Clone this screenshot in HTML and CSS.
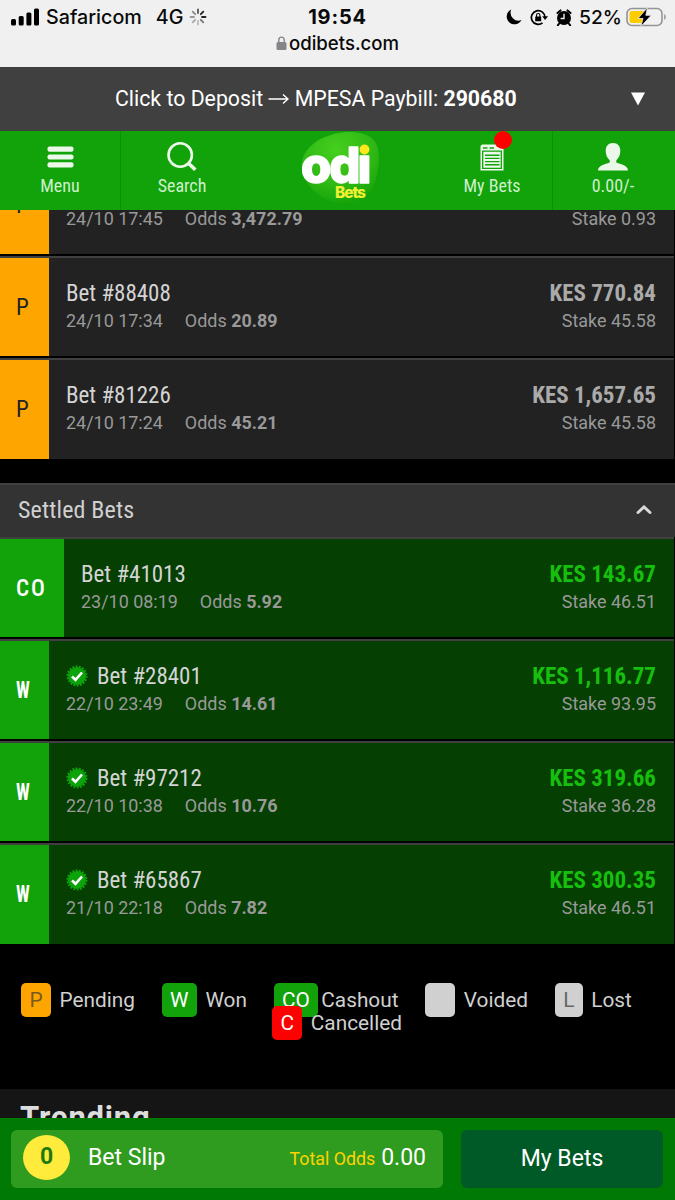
FILE: index.html
```html
<!DOCTYPE html>
<html lang="en">
<head>
    <meta charset="UTF-8">
    <meta name="viewport" content="width=device-width, initial-scale=1.0">
    <title>OdiBets - My Bets</title>
    <link rel="stylesheet" href="styles.css">
</head>
<body>
    <div class="status-bar">
        <div class="status-left">
            <svg class="signal" width="28" height="18" viewBox="0 0 28 18">
                <rect x="0" y="11" width="5" height="6.500" rx="1.500"/>
                <rect x="7.700" y="8" width="5" height="9.500" rx="1.500"/>
                <rect x="15.400" y="4.500" width="5" height="13" rx="1.500"/>
                <rect x="23" y="0.500" width="5" height="17" rx="1.500"/>
            </svg>
            <span class="carrier">Safaricom</span>
            <span class="network">4G</span>
            <svg class="spinner" width="18" height="18" viewBox="-9 -9 18 18" stroke-width="1.800" stroke-linecap="round">
                <path d="M0-4V-7.500" stroke="#555"/>
                <path d="M2.800-2.800L5.300-5.300" stroke="#222"/>
                <path d="M4 0H7.500" stroke="#222"/>
                <path d="M2.800 2.800L5.300 5.300" stroke="#777"/>
                <path d="M0 4V7.500" stroke="#bbb"/>
                <path d="M-2.800 2.800L-5.300 5.300" stroke="#aaa"/>
                <path d="M-4 0H-7.500" stroke="#999"/>
                <path d="M-2.800-2.800L-5.300-5.300" stroke="#888"/>
            </svg>
        </div>
        <div class="status-center">
            <div class="clock">19:54</div>
            <div class="url">
                <svg width="11" height="14" viewBox="0 0 11 14">
                    <path d="M2.800 7V4a2.700 2.900 0 0 1 5.400 0V7" fill="none" stroke="#858589" stroke-width="1.400"/>
                    <rect x="0.500" y="6" width="10" height="8" rx="1.500" fill="#858589"/>
                </svg>
                <span>odibets.com</span>
            </div>
        </div>
        <div class="status-right">
            <svg width="16" height="16" viewBox="0 0 16 16">
                <path d="M5.200 0.500A7.800 7.800 0 1 0 15.500 11 8 8 0 0 1 5.200 0.500Z"/>
            </svg>
            <svg class="rotation" width="18" height="17" viewBox="0 0 18 17">
                <path d="M15 8.500A6.800 6.800 0 1 0 12.500 13.800" fill="none" stroke="#000" stroke-width="1.700"/>
                <path d="M12.200 7.300H18L15.100 11Z"/>
                <rect x="5.200" y="7.500" width="6" height="4.800" rx="0.600"/>
                <path d="M6.500 8V6.200a1.700 1.700 0 0 1 3.400 0V8" fill="none" stroke="#000" stroke-width="1.100"/>
            </svg>
            <svg class="alarm" width="16" height="17" viewBox="0 0 16 17">
                <circle cx="8" cy="9" r="7"/>
                <path d="M1.500 4L4.500 1.400M14.500 4L11.500 1.400M3.200 14.500L1.800 16.300M12.800 14.500L14.200 16.300" stroke="#000" stroke-width="2" stroke-linecap="round"/>
                <path d="M8 4.800V9.500H4.600" fill="none" stroke="#f0f0f0" stroke-width="1.400"/>
            </svg>
            <span class="percent">52%</span>
            <svg class="battery" width="41" height="20" viewBox="0 0 41 20">
                <rect x="1" y="1.500" width="35" height="17" rx="5" fill="none" stroke="#949497" stroke-width="1.600"/>
                <path d="M6 4H18V16H6a2.500 2.500 0 0 1-2.500-2.500V6.500A2.500 2.500 0 0 1 6 4Z" fill="#fc0"/>
                <path d="M38.200 7a3.500 3.500 0 0 1 0 6Z" fill="#949497"/>
                <path d="M21.500 0.500L12 11.500H17L14.800 19.500L25.300 8.300H19.800Z" stroke="#f0f0f0" stroke-width="0.800"/>
            </svg>
        </div>
    </div>

    <div class="deposit">
        <span class="deposit-text">Click to Deposit
            <svg width="21" height="12" viewBox="0 0 21 12"><path d="M0.500 5H20M15 0.500L20 5L15 9.500" fill="none" stroke="#fff" stroke-width="1.400"/></svg>
            MPESA Paybill: <b>290680</b></span>
        <svg class="deposit-arrow" width="14" height="14" viewBox="0 0 14 14"><path d="M0 0.500H14L7 13.500Z" fill="#fff"/></svg>
    </div>

    <nav class="nav">
        <a class="nav-item nav-menu">
            <svg width="27" height="22" viewBox="0 0 27 22">
                <rect x="0.500" y="0.500" width="26" height="5.200" rx="2"/>
                <rect x="0.500" y="8.400" width="26" height="5.200" rx="2"/>
                <rect x="0.500" y="16.300" width="26" height="5.200" rx="2"/>
            </svg>
            <span>Menu</span>
        </a>
        <a class="nav-item nav-search">
            <svg width="30" height="30" viewBox="0 0 30 30">
                <circle cx="13.200" cy="13" r="11.700" fill="none" stroke="#ecf9ea" stroke-width="2.600"/>
                <path d="M21.500 21.200L28.300 27.800" stroke="#ecf9ea" stroke-width="3.600"/>
            </svg>
            <span>Search</span>
        </a>
        <a class="nav-logo">
            <svg width="84" height="76" viewBox="0 0 84 76">
                <defs>
                    <radialGradient id="leaf" cx="45%" cy="25%" r="75%">
                        <stop offset="0" stop-color="#45cf1e"/>
                        <stop offset="0.650" stop-color="#2fb814"/>
                        <stop offset="1" stop-color="#14a308"/>
                    </radialGradient>
                </defs>
                <path d="M3 30C8 9 36-1 58 1.500C73 3 80 12 80 25C80 46 73 67 60 72C40 78 14 66 6 48C3 42 2 36 3 30Z" fill="url(#leaf)"/>
                <text class="logo-odi" x="2" y="52">od</text>
                <text class="logo-odi" x="58.500" y="52">&#305;</text>
                <circle cx="65.500" cy="18.500" r="4.900" fill="#ffe81c"/>
                <text class="logo-bets" x="36" y="67" textLength="31">Bets</text>
            </svg>
        </a>
        <a class="nav-item nav-bets">
            <svg width="24" height="27" viewBox="0 0 24 27">
                <path d="M2 0.500H22L23.500 2V26.500H0.500V2Z"/>
                <path d="M3 4H7.500M9.500 4H14" stroke="#12a20a" stroke-width="1.600"/>
                <path d="M2.700 7.200H21.300V24.300H2.700Z" stroke="#12a20a" stroke-width="1.300" fill="none"/>
                <path d="M5 11.200H19.500M5 14.400H19.500M5 17.600H19.500M5 20.800H19.500" stroke="#12a20a" stroke-width="1.400"/>
            </svg>
            <i class="dot"></i>
            <span>My Bets</span>
        </a>
        <a class="nav-item nav-user">
            <svg width="30" height="28" viewBox="0 0 30 28">
                <path d="M15 0C19.800 0 22.300 3.200 22.300 8C22.300 12 20.500 15.500 18.300 17.200V19.500C23 21.300 30 22.500 30 27.500H0C0 22.500 7 21.300 11.700 19.500V17.200C9.500 15.500 7.700 12 7.700 8C7.700 3.200 10.200 0 15 0Z"/>
            </svg>
            <span>0.00/-</span>
        </a>
    </nav>

    <main class="content">
        <div class="bets pending">
            <div class="bet">
                <div class="tag">P</div>
                <div class="info">
                    <div class="title"></div>
                    <div class="meta"><span>24/10 17:45</span><span>Odds <b>3,472.79</b></span></div>
                </div>
                <div class="amount">
                    <div class="payout"></div>
                    <div class="meta">Stake 0.93</div>
                </div>
            </div>
            <div class="bet">
                <div class="tag">P</div>
                <div class="info">
                    <div class="title"><span>Bet #88408</span></div>
                    <div class="meta"><span>24/10 17:34</span><span>Odds <b>20.89</b></span></div>
                </div>
                <div class="amount">
                    <div class="payout">KES 770.84</div>
                    <div class="meta">Stake 45.58</div>
                </div>
            </div>
            <div class="bet">
                <div class="tag">P</div>
                <div class="info">
                    <div class="title"><span>Bet #81226</span></div>
                    <div class="meta"><span>24/10 17:24</span><span>Odds <b>45.21</b></span></div>
                </div>
                <div class="amount">
                    <div class="payout">KES 1,657.65</div>
                    <div class="meta">Stake 45.58</div>
                </div>
            </div>
        </div>

        <div class="section-head">
            <span>Settled Bets</span>
            <svg width="16" height="11" viewBox="0 0 16 11"><path d="M2 7.500L8 2L14 7.500" fill="none" stroke="#d8d8d8" stroke-width="3" stroke-linecap="round"/></svg>
        </div>

        <div class="bets settled">
            <div class="bet">
                <div class="tag cashout">CO</div>
                <div class="info">
                    <div class="title"><span>Bet #41013</span></div>
                    <div class="meta"><span>23/10 08:19</span><span>Odds <b>5.92</b></span></div>
                </div>
                <div class="amount">
                    <div class="payout">KES 143.67</div>
                    <div class="meta">Stake 46.51</div>
                </div>
            </div>
            <div class="bet">
                <div class="tag"><span class="won">W</span></div>
                <div class="info">
                    <div class="title">
                        <svg class="check" width="22" height="22" viewBox="-11 -11 22 22">
                            <circle r="9"/><circle class="teeth" r="9.500"/>
                            <path d="M-5 0.500L-1.500 3.800L5 -3.500"/>
                        </svg>
                        <span>Bet #28401</span>
                    </div>
                    <div class="meta"><span>22/10 23:49</span><span>Odds <b>14.61</b></span></div>
                </div>
                <div class="amount">
                    <div class="payout">KES 1,116.77</div>
                    <div class="meta">Stake 93.95</div>
                </div>
            </div>
            <div class="bet">
                <div class="tag"><span class="won">W</span></div>
                <div class="info">
                    <div class="title">
                        <svg class="check" width="22" height="22" viewBox="-11 -11 22 22">
                            <circle r="9"/><circle class="teeth" r="9.500"/>
                            <path d="M-5 0.500L-1.500 3.800L5 -3.500"/>
                        </svg>
                        <span>Bet #97212</span>
                    </div>
                    <div class="meta"><span>22/10 10:38</span><span>Odds <b>10.76</b></span></div>
                </div>
                <div class="amount">
                    <div class="payout">KES 319.66</div>
                    <div class="meta">Stake 36.28</div>
                </div>
            </div>
            <div class="bet">
                <div class="tag"><span class="won">W</span></div>
                <div class="info">
                    <div class="title">
                        <svg class="check" width="22" height="22" viewBox="-11 -11 22 22">
                            <circle r="9"/><circle class="teeth" r="9.500"/>
                            <path d="M-5 0.500L-1.500 3.800L5 -3.500"/>
                        </svg>
                        <span>Bet #65867</span>
                    </div>
                    <div class="meta"><span>21/10 22:18</span><span>Odds <b>7.82</b></span></div>
                </div>
                <div class="amount">
                    <div class="payout">KES 300.35</div>
                    <div class="meta">Stake 46.51</div>
                </div>
            </div>
        </div>

        <div class="legend">
            <div class="legend-row">
                <span class="key"><i class="key-box orange">P</i>Pending</span>
                <span class="key"><i class="key-box green">W</i>Won</span>
                <span class="key"><i class="key-box green tight">CO</i>Cashout</span>
                <span class="key"><i class="key-box grey blank"></i>Voided</span>
                <span class="key"><i class="key-box grey">L</i>Lost</span>
            </div>
            <div class="legend-row second">
                <span class="key"><i class="key-box red">C</i>Cancelled</span>
            </div>
        </div>

        <div class="trending">Trending</div>
    </main>

    <footer class="footer">
        <div class="slip">
            <span class="count">0</span>
            <span class="slip-name">Bet Slip</span>
            <span class="odds-label">Total Odds</span>
            <span class="odds-value">0.00</span>
        </div>
        <div class="my-bets">My Bets</div>
    </footer>
</body>
</html>
```
FILE: styles.css
```css
* {
    box-sizing: border-box;
}

body {
    margin: 0;
    height: 1200px;
    display: flex;
    flex-direction: column;
    overflow: hidden;
    background: #000;
    font-family: Roboto, "Liberation Sans", sans-serif;
}

i {
    font-style: normal;
}

svg {
    display: block;
    flex: none;
}

/* phone status bar */
.status-bar {
    flex: none;
    height: 67px;
    display: grid;
    grid-template-columns: 1fr 140px 1fr;
    background: #f0f0f0;
    color: #0a0a0a;
    font-family: Inter, "Liberation Sans", sans-serif;
    font-size: 19.700px;
    font-weight: 500;
}

.status-left, .status-right {
    display: flex;
    align-items: center;
    height: 34px;
}

.status-left {
    padding-left: 11px;
}

.carrier {
    margin-left: 7px;
}

.network {
    margin-left: 14px;
}

.spinner {
    margin-left: 6px;
}

.status-center {
    text-align: center;
}

.clock {
    height: 34px;
    line-height: 34px;
    font-size: 20px;
    font-weight: 700;
    letter-spacing: 0.8px;
}

.url {
    display: flex;
    justify-content: center;
    align-items: center;
    height: 18px;
    gap: 2px;
    font-size: 18.600px;
}

.status-right {
    justify-content: flex-end;
    padding-right: 8px;
}

.rotation {
    margin-left: 8px;
}

.alarm {
    margin-left: 8px;
}

.percent {
    margin-left: 7px;
    font-size: 19.300px;
}

.battery {
    margin-left: 4px;
}

/* deposit strip */
.deposit {
    flex: none;
    height: 64px;
    display: flex;
    align-items: center;
    padding: 0 30px 1px 115px;
    background: #404040;
    color: #fff;
    font-size: 21.300px;
}

.deposit-text {
    flex: 1;
    white-space: nowrap;
}

.deposit-text svg {
    display: inline-block;
}

/* main navigation */
.nav {
    flex: none;
    height: 79px;
    display: grid;
    grid-template-columns: 121px 122px 189px 120px 123px;
    background: #12a20a;
    color: #cdf0ca;
    font-size: 18px;
    font-stretch: 75%;
}

.nav-item {
    position: relative;
    display: flex;
    flex-direction: column;
    align-items: center;
    fill: #ecf9ea;
}

.nav-item span {
    margin-top: auto;
    height: 35px;
    line-height: 21px;
}

.nav-menu {
    padding-top: 15px;
    border-right: 1px solid #0e8f08;
}

.nav-search {
    padding-top: 11px;
}

.nav-bets {
    padding-top: 13px;
}

.nav-user {
    padding: 12px 2px 0 0;
    border-left: 1px solid #0e8f08;
}

.nav-logo {
    padding-left: 56px;
}

.logo-odi {
    font-family: Inter, sans-serif;
    font-size: 49px;
    font-weight: 800;
    font-stretch: 100%;
    letter-spacing: -2px;
    fill: #fff;
    stroke: #fff;
    stroke-width: 1.500;
    stroke-linejoin: round;
}

.logo-bets {
    font-family: Inter, sans-serif;
    font-size: 15.500px;
    font-weight: 800;
    fill: #f0f032;
}

.dot {
    position: absolute;
    top: 0;
    left: 62px;
    width: 18px;
    height: 18px;
    border-radius: 50%;
    background: #f00;
}

/* bet lists */
.content {
    flex: 1;
    min-height: 0;
    overflow: hidden;
}

.bets {
    padding-right: 1px;
}

.pending {
    margin-top: -56px;
}

.bet {
    display: flex;
    height: 102px;
    border-top: 2px solid #404040;
    border-bottom: 2px solid #000;
    background: #222;
}

.bet:last-child {
    border-bottom-width: 1px;
}

.tag {
    width: 49px;
    padding-left: 16px;
    line-height: 100px;
    overflow: hidden;
    background: #ffa500;
    color: #222;
    font-size: 23px;
    font-weight: 400;
    font-stretch: 85%;
}

.info {
    flex: 1;
    padding: 21px 0 0 17px;
}

.title {
    display: flex;
    align-items: center;
    gap: 9px;
    height: 28px;
    color: #d4d4d4;
    font-size: 23px;
    font-stretch: 75%;
}

.meta {
    display: flex;
    gap: 22px;
    height: 28px;
    line-height: 28px;
    color: #999;
    font-size: 17.950px;
}

.amount {
    padding: 21px 18px 0 0;
    display: flex;
    flex-direction: column;
    align-items: flex-end;
}

.payout {
    height: 28px;
    line-height: 30px;
    color: #aaa;
    font-size: 23px;
    font-weight: 700;
    font-stretch: 75%;
}

.settled .bet {
    background: #063f02;
}

.settled .tag {
    background: #12a20a;
    color: #fff;
    font-weight: 700;
    font-stretch: 75%;
}

.settled .cashout {
    width: 64px;
    font-weight: 500;
    letter-spacing: 2px;
}

.won {
    display: inline-block;
    transform: scaleX(0.8);
    transform-origin: left;
}

.settled .payout {
    color: #16bf0e;
}

.check circle {
    fill: #0da30a;
}

.check .teeth {
    fill: none;
    stroke: #0da30a;
    stroke-width: 2;
    stroke-dasharray: 1.800 1.517;
}

.check path {
    fill: none;
    stroke: #fff;
    stroke-width: 2.600;
}

.section-head {
    display: flex;
    align-items: center;
    justify-content: space-between;
    height: 54px;
    margin-top: 23px;
    padding: 0 23px 2px 18px;
    border-top: 2px solid #404040;
    background: #333;
    color: #d0d0d0;
    font-size: 24px;
    font-stretch: 75%;
    letter-spacing: 0.150px;
}

/* legend below the settled bets */
.legend {
    height: 144px;
    padding-top: 44px;
    color: #d0d0d0;
    font-size: 20.800px;
    line-height: 23px;
}

.legend-row {
    display: flex;
    gap: 26.800px;
    padding-left: 21px;
}

.second {
    padding-left: 272px;
}

.key {
    height: 23px;
    white-space: nowrap;
}

.key-box {
    display: inline-block;
    height: 34px;
    margin: -6px 8.500px -6px 0;
    padding: 0 8.400px;
    border-radius: 5px;
    line-height: 34px;
}

.orange {
    background: #ffa500;
    color: #7a5a20;
}

.green {
    background: #12a20a;
    color: #fff;
}

.grey {
    background: #d0d0d0;
    color: #666;
}

.red {
    background: #f00;
    color: #fff;
}

.blank {
    width: 30px;
    margin-top: -9px;
    vertical-align: top;
    margin-top: -6px;
}

.tight {
    margin-right: 3px;
}

.trending {
    height: 80px;
    padding: 10px 20px;
    background: #151515;
    color: #ddd;
    font-size: 31px;
    font-weight: 700;
    letter-spacing: 0.800px;
}

/* fixed bottom bar */
.footer {
    flex: none;
    height: 82px;
    display: flex;
    gap: 18px;
    padding: 12px 12px 12px 11px;
    background: #007a05;
    color: #fff;
    font-size: 23px;
}

.slip {
    width: 432px;
    display: flex;
    align-items: center;
    padding: 0 17px 4px 12px;
    border-radius: 6px;
    background: #2f9b1f;
}

.count {
    width: 47px;
    height: 45px;
    border-radius: 50%;
    background: #ffeb3b;
    color: #1d7a10;
    font-weight: 700;
    line-height: 44px;
    text-align: center;
}

.slip-name {
    flex: 1;
    margin-left: 18px;
}

.odds-label {
    margin-right: 6px;
    padding-top: 2px;
    color: #ffd400;
    font-size: 17.800px;
}

.my-bets {
    flex: 1;
    border-radius: 6px;
    background: #005a28;
    line-height: 57px;
    text-align: center;
}
```
